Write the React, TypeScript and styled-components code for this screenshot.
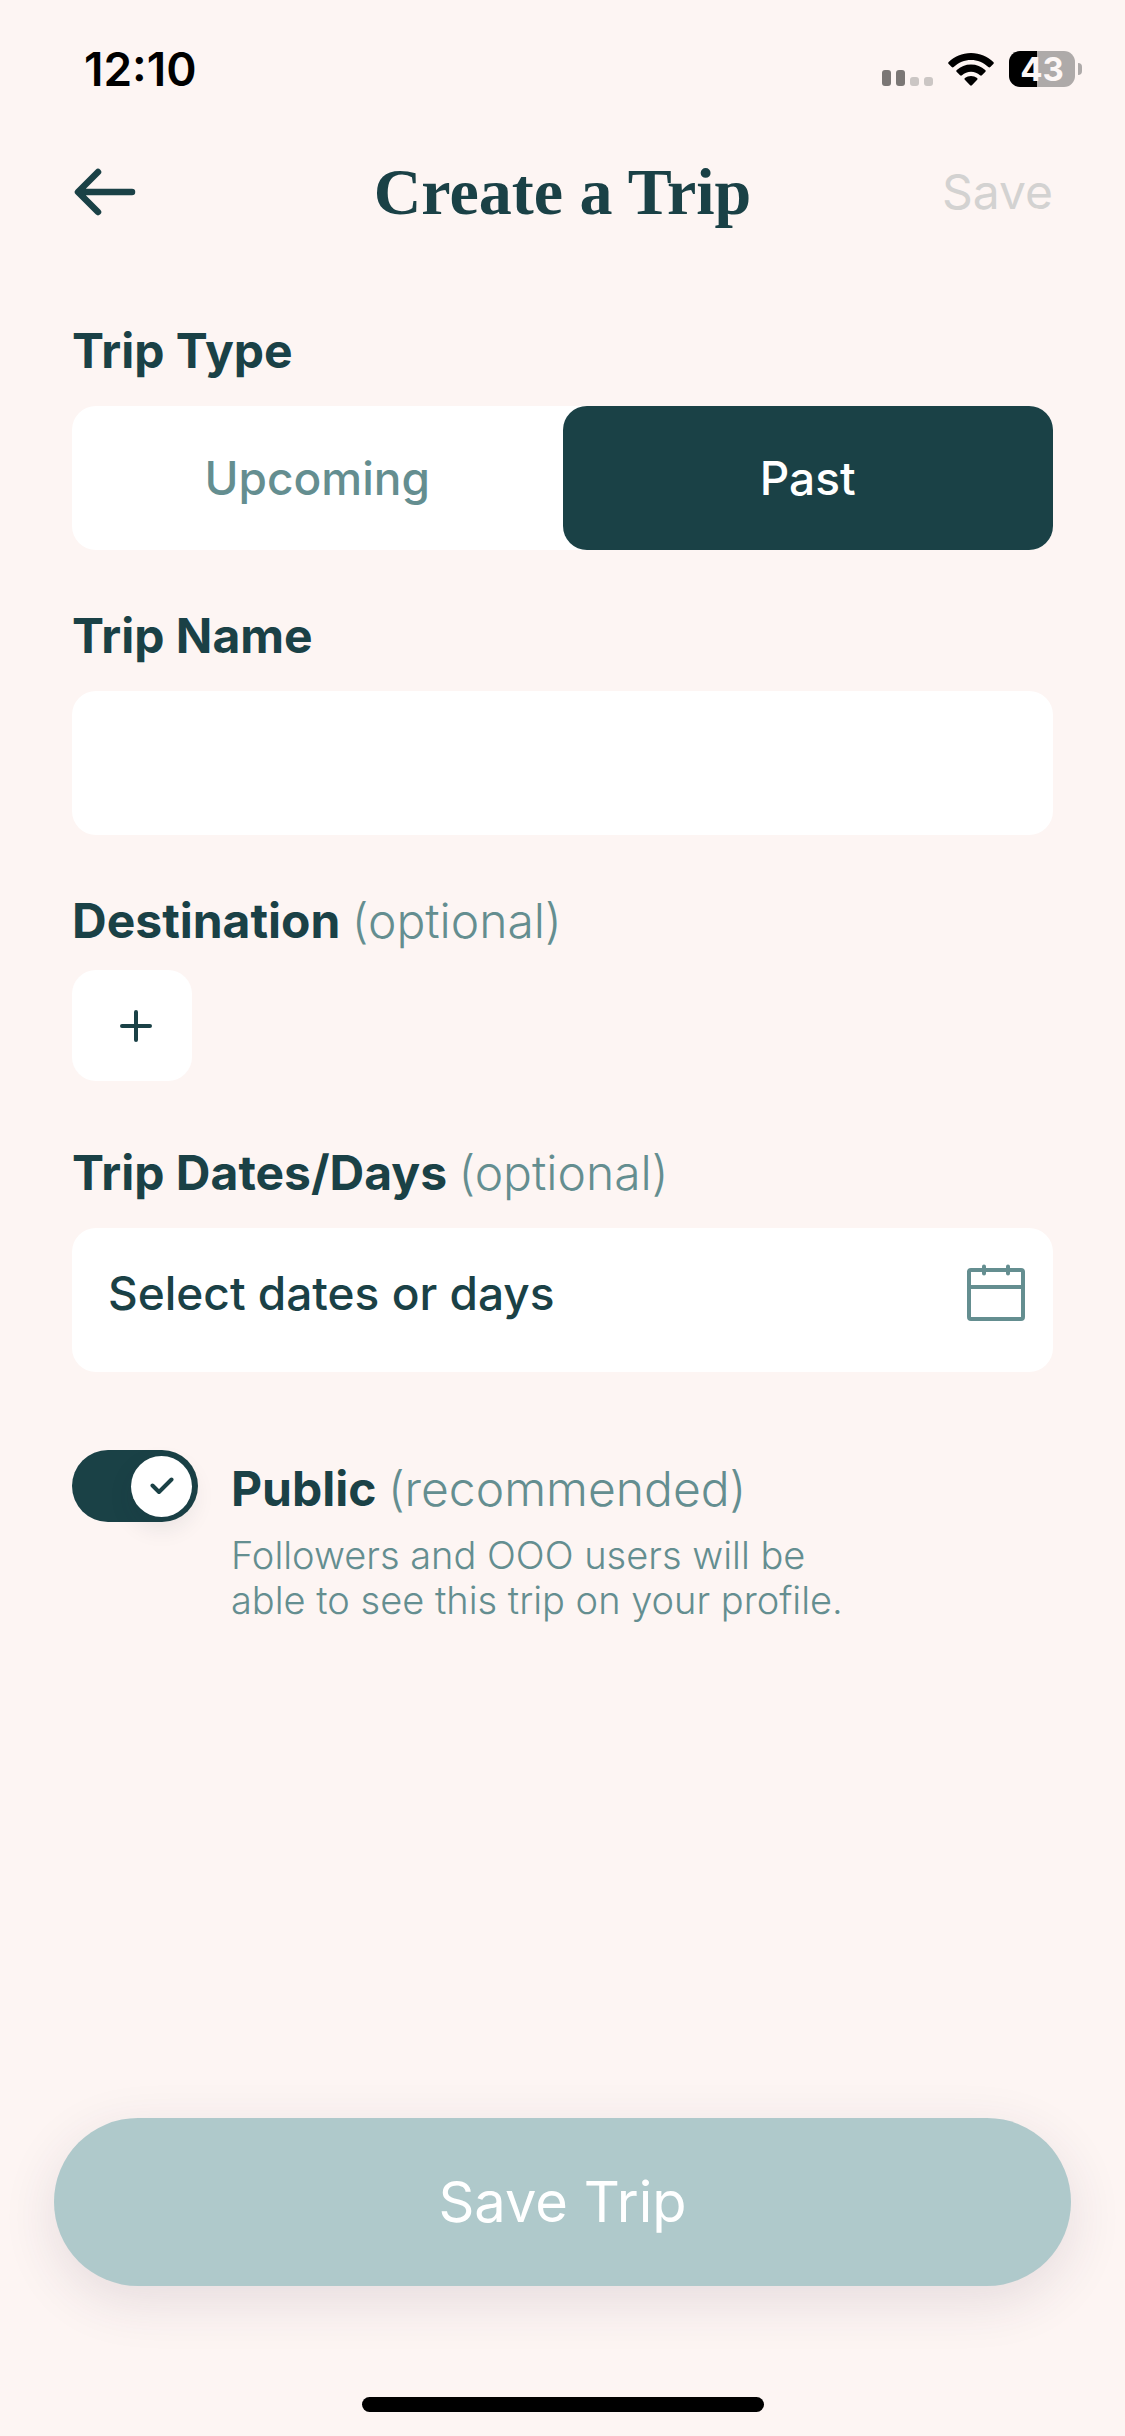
import React, { useState } from "react";
import styled, { createGlobalStyle } from "styled-components";

const color = {
  page: "#fdf5f3",
  ink: "#1a4146",
  teal: "#648e90",
  white: "#ffffff",
  disabled: "#d3d2d1",
  cta: "#afc9cb",
};

const GlobalStyle = createGlobalStyle`
  *, *::before, *::after { box-sizing: border-box; }
  body {
    margin: 0;
    background: ${color.page};
    color: ${color.ink};
    font-family: Inter, "Open Sans", sans-serif;
  }
  button, input { font: inherit; color: inherit; border: 0; padding: 0; }
  button { background: none; cursor: pointer; }
  button:disabled { cursor: default; }
`;

const Screen = styled.div`
  min-height: 100vh;
  display: flex;
  flex-direction: column;
`;

const StatusBar = styled.div`
  height: 138px;
  padding: 0 43px 0 84px;
  display: flex;
  align-items: center;
  justify-content: space-between;
  color: #000;
`;

const Clock = styled.time`
  font-size: 46px;
  font-weight: 600;
  line-height: 60px;
`;

const StatusIcons = styled.div`
  display: flex;
  align-items: center;
  gap: 15px;
`;

const Battery = styled.div`
  display: flex;
  align-items: center;
  gap: 3px;
`;

const BatteryLevel = styled.div<{ $level: number }>`
  width: 66px;
  height: 36px;
  border-radius: 11px;
  display: grid;
  place-items: center;
  background: linear-gradient(to right, #000 ${(p) => p.$level}%, #aeaaa9 ${(p) => p.$level}%);
  color: #fdf7f6;
  font-size: 33px;
  font-weight: 700;
  line-height: 36px;
`;

const BatteryTip = styled.span`
  width: 4px;
  height: 12px;
  border-radius: 0 4px 4px 0;
  background: #aeaaa9;
`;

const Header = styled.header`
  height: 108px;
  padding: 0 72px;
  display: grid;
  grid-template-columns: 1fr auto 1fr;
  align-items: center;
`;

const BackButton = styled.button`
  justify-self: start;
  display: flex;
`;

const Title = styled.h1`
  margin: 0;
  font-family: "Liberation Serif", serif;
  font-size: 66px;
  font-weight: 700;
  line-height: 80px;
`;

const HeaderAction = styled.button`
  justify-self: end;
  font-size: 48px;
  font-weight: 400;
  line-height: 60px;
  &:disabled { color: ${color.disabled}; }
`;

const Form = styled.form`
  flex: 1;
  display: flex;
  flex-direction: column;
  padding: 75px 0 24px;
`;

const Fields = styled.div`
  display: flex;
  flex-direction: column;
  gap: 56px;
  padding: 0 72px;
`;

const Field = styled.div<{ $compact?: boolean }>`
  display: flex;
  flex-direction: column;
  align-items: stretch;
  gap: ${(p) => (p.$compact ? 19 : 25)}px;
  padding-bottom: ${(p) => (p.$compact ? 6 : 0)}px;
`;

const Label = styled.label`
  font-size: 48px;
  font-weight: 700;
  line-height: 60px;
`;

const Hint = styled.span`
  color: ${color.teal};
  font-weight: 300;
`;

const Segments = styled.div`
  height: 144px;
  display: grid;
  grid-template-columns: 1fr 1fr;
  border-radius: 24px;
  background: ${color.white};
`;

const Segment = styled.label<{ $active: boolean }>`
  display: grid;
  place-items: center;
  border-radius: 24px;
  background: ${(p) => (p.$active ? color.ink : "transparent")};
  color: ${(p) => (p.$active ? color.white : color.teal)};
  font-size: 46px;
  font-weight: 500;
  line-height: 60px;
  cursor: pointer;
`;

const SegmentText = styled.span`
  grid-area: 1 / 1;
`;

const SegmentInput = styled.input`
  grid-area: 1 / 1;
  appearance: none;
  margin: 0;
`;

const TextInput = styled.input`
  width: 100%;
  height: 144px;
  padding: 0 36px;
  border-radius: 24px;
  background: ${color.white};
  font-size: 46px;
  font-weight: 500;
`;

const AddButton = styled.button`
  width: 120px;
  height: 111px;
  padding-left: 8px;
  display: grid;
  place-items: center;
  border-radius: 24px;
  background: ${color.white};
`;

const DateButton = styled.button`
  width: 100%;
  height: 144px;
  padding: 0 27px 14px 36px;
  display: flex;
  align-items: center;
  justify-content: space-between;
  border-radius: 24px;
  background: ${color.white};
  font-size: 46px;
  font-weight: 500;
  line-height: 60px;
`;

const VisibilityRow = styled.div`
  display: flex;
  align-items: flex-start;
  gap: 33px;
  padding: 78px 72px 0;
`;

const Switch = styled.span`
  display: grid;
  align-items: center;
  flex: none;
`;

const SwitchInput = styled.input`
  grid-area: 1 / 1;
  appearance: none;
  width: 126px;
  height: 72px;
  margin: 0;
  border-radius: 36px;
  background: ${color.teal};
  cursor: pointer;
  &:checked { background: ${color.ink}; }
`;

const Knob = styled.span<{ $on: boolean }>`
  grid-area: 1 / 1;
  justify-self: ${(p) => (p.$on ? "end" : "start")};
  display: grid;
  place-items: center;
  width: 61px;
  height: 61px;
  margin: 0 6px;
  border-radius: 50%;
  background: ${color.white};
  box-shadow: 0 10px 24px rgba(26, 40, 60, 0.1);
  pointer-events: none;
`;

const VisibilityText = styled.div`
  padding-top: 9px;
  display: flex;
  flex-direction: column;
  gap: 14px;
`;

const Description = styled.p`
  margin: 0;
  color: ${color.teal};
  font-size: 38px;
  font-weight: 300;
  line-height: 45px;
`;

const Footer = styled.div`
  margin-top: auto;
  padding: 78px 54px 0;
  display: flex;
  flex-direction: column;
  align-items: center;
  gap: 111px;
`;

const SaveButton = styled.button`
  width: 100%;
  height: 168px;
  border-radius: 84px;
  background: ${color.ink};
  color: ${color.white};
  box-shadow: 0 15px 54px rgba(60, 40, 70, 0.12);
  font-size: 56px;
  font-weight: 400;
  line-height: 72px;
  &:disabled { background: ${color.cta}; }
`;

const HomeIndicator = styled.div`
  width: 402px;
  height: 15px;
  border-radius: 8px;
  background: #000;
`;

const SignalIcon = () => (
  <svg width="51" height="33" viewBox="0 0 51 33" aria-hidden="true">
    <rect x="0" y="17" width="9" height="16" rx="3" fill="#7b7775" />
    <rect x="14" y="17" width="9" height="16" rx="3" fill="#7b7775" />
    <rect x="28" y="24" width="9" height="9" rx="3" fill="#cbc6c4" />
    <rect x="42" y="24" width="9" height="9" rx="3" fill="#cbc6c4" />
  </svg>
);

const WifiIcon = () => (
  <svg width="46" height="33" viewBox="0 0 46 33" aria-hidden="true">
    <path d="M23 0C32 0 39.500 3.500 45.300 9c.7.700.7 1.300 0 2l-3 3c-.6.600-1.300.600-2 0C35.500 9.600 29.500 7 23 7S10.500 9.600 5.700 14c-.7.600-1.400.600-2 0l-3-3c-.7-.7-.7-1.300 0-2C6.500 3.500 14 0 23 0z" />
    <path d="M23 11.500c5.500 0 10.400 2 14.200 5.500.7.700.7 1.300 0 2l-3.300 3.300c-.6.600-1.200.600-1.900 0-2.500-2.200-5.600-3.500-9-3.500s-6.500 1.300-9 3.500c-.7.600-1.300.600-1.900 0L8.800 19c-.7-.7-.7-1.300 0-2C12.600 13.500 17.500 11.500 23 11.500z" />
    <path d="M23 23c2.300 0 4.400.7 6.100 2 .6.500.6 1.200.1 1.700l-5.300 5.600c-.6.600-1.200.600-1.800 0l-5.300-5.600c-.5-.5-.5-1.200.1-1.700 1.700-1.300 3.800-2 6.100-2z" />
  </svg>
);

const BackIcon = () => (
  <svg width="66" height="48" viewBox="0 0 66 48" fill="none" stroke={color.ink} strokeWidth="6.500" strokeLinecap="round" strokeLinejoin="round" aria-hidden="true">
    <path d="M26 4 6 24l20 20M7 24h53" />
  </svg>
);

const PlusIcon = () => (
  <svg width="32" height="32" viewBox="0 0 32 32" stroke={color.ink} strokeWidth="4" strokeLinecap="round" aria-hidden="true">
    <path d="M16 2v28M2 16h28" />
  </svg>
);

const CalendarIcon = () => (
  <svg width="60" height="58" viewBox="0 0 60 58" fill="none" stroke={color.teal} strokeWidth="4" strokeLinecap="round" aria-hidden="true">
    <rect x="3" y="6" width="54" height="49" rx="2" />
    <path d="M3 23h54M18 2.500v7M42 2.500v7" />
  </svg>
);

const CheckIcon = () => (
  <svg width="24" height="18" viewBox="0 0 24 18" fill="none" stroke={color.ink} strokeWidth="4" strokeLinecap="round" strokeLinejoin="round" aria-hidden="true">
    <path d="M2.500 8.500 9 15 21.500 2.500" />
  </svg>
);

const tripTypes = ["Upcoming", "Past"];

export default function App() {
  const [tripType, setTripType] = useState("Past");
  const [name, setName] = useState("");
  const [isPublic, setIsPublic] = useState(true);
  const canSave = name.trim().length > 0;

  return (
    <Screen>
      <GlobalStyle />
      <StatusBar>
        <Clock>12:10</Clock>
        <StatusIcons>
          <SignalIcon />
          <WifiIcon />
          <Battery>
            <BatteryLevel $level={43}>43</BatteryLevel>
            <BatteryTip />
          </Battery>
        </StatusIcons>
      </StatusBar>

      <Header>
        <BackButton type="button" aria-label="Back">
          <BackIcon />
        </BackButton>
        <Title>Create a Trip</Title>
        <HeaderAction type="submit" form="trip-form" disabled={!canSave}>
          Save
        </HeaderAction>
      </Header>

      <Form id="trip-form" onSubmit={(e) => e.preventDefault()}>
        <Fields>
          <Field role="radiogroup" aria-labelledby="type-label">
            <Label as="span" id="type-label">Trip Type</Label>
            <Segments>
              {tripTypes.map((type) => (
                <Segment key={type} $active={type === tripType}>
                  <SegmentInput
                    type="radio"
                    name="trip-type"
                    value={type}
                    checked={type === tripType}
                    onChange={() => setTripType(type)}
                  />
                  <SegmentText>{type}</SegmentText>
                </Segment>
              ))}
            </Segments>
          </Field>

          <Field>
            <Label htmlFor="trip-name">Trip Name</Label>
            <TextInput id="trip-name" type="text" value={name} onChange={(e) => setName(e.target.value)} />
          </Field>

          <Field $compact>
            <Label htmlFor="destination">
              Destination <Hint>(optional)</Hint>
            </Label>
            <AddButton id="destination" type="button">
              <PlusIcon />
            </AddButton>
          </Field>

          <Field>
            <Label htmlFor="trip-dates">
              Trip Dates/Days <Hint>(optional)</Hint>
            </Label>
            <DateButton id="trip-dates" type="button">
              Select dates or days
              <CalendarIcon />
            </DateButton>
          </Field>
        </Fields>

        <VisibilityRow>
          <Switch>
            <SwitchInput
              id="public"
              type="checkbox"
              role="switch"
              aria-describedby="public-description"
              checked={isPublic}
              onChange={(e) => setIsPublic(e.target.checked)}
            />
            <Knob $on={isPublic}>{isPublic && <CheckIcon />}</Knob>
          </Switch>
          <VisibilityText>
            <Label htmlFor="public">
              Public <Hint>(recommended)</Hint>
            </Label>
            <Description id="public-description">
              Followers and OOO users will be
              <br />
              able to see this trip on your profile.
            </Description>
          </VisibilityText>
        </VisibilityRow>

        <Footer>
          <SaveButton type="submit" disabled={!canSave}>Save Trip</SaveButton>
          <HomeIndicator />
        </Footer>
      </Form>
    </Screen>
  );
}
